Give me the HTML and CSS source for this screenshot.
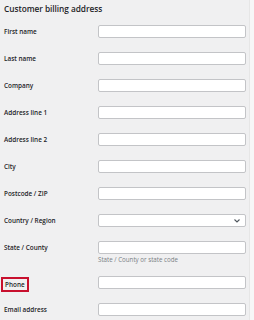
FILE: index.html
```html
<!DOCTYPE html>
<html lang="en">

<head>
    <meta charset="UTF-8">
    <meta name="viewport" content="width=device-width, initial-scale=1.0">
    <title>Customer billing address</title>
    <link rel="stylesheet" href="styles.css">
</head>

<body>

    <div class="panel">
        <h2 class="title">Customer billing address</h2>

        <div class="form">
            <div class="row">
                <label for="first_name">First name</label>
                <input type="text" id="first_name">
            </div>
            <div class="row">
                <label for="last_name">Last name</label>
                <input type="text" id="last_name">
            </div>
            <div class="row">
                <label for="company">Company</label>
                <input type="text" id="company">
            </div>
            <div class="row">
                <label for="address_1">Address line 1</label>
                <input type="text" id="address_1">
            </div>
            <div class="row">
                <label for="address_2">Address line 2</label>
                <input type="text" id="address_2">
            </div>
            <div class="row">
                <label for="city">City</label>
                <input type="text" id="city">
            </div>
            <div class="row">
                <label for="postcode">Postcode / ZIP</label>
                <input type="text" id="postcode">
            </div>
            <div class="row">
                <label for="country">Country / Region</label>
                <div class="select-wrap">
                    <select id="country">
                        <option value=""></option>
                    </select>
                    <svg class="chevron" width="6" height="4" viewBox="0 0 6 4">
                        <path d="M0.5 0.5 L3 3 L5.5 0.5" fill="none" stroke="#50575e" stroke-width="1.1"/>
                    </svg>
                </div>
            </div>
            <div class="row row-desc">
                <label for="state">State / County</label>
                <div class="field">
                    <input type="text" id="state">
                    <p class="description">State / County or state code</p>
                </div>
            </div>
            <div class="row">
                <label for="phone"><span class="highlight">Phone</span></label>
                <input type="text" id="phone">
            </div>
            <div class="row">
                <label for="email">Email address</label>
                <input type="text" id="email">
            </div>
        </div>
    </div>

</body>

</html>
```

FILE: styles.css
```css
body {
    margin: 0;
    padding: 0;
    background-color: #f7f7f7;
    font-family: "Open Sans", "Noto Sans", sans-serif;
    color: #1d2327;
}

.panel {
    width: 250px;
    height: 320px;
    box-sizing: border-box;
    background-color: #f0f0f1;
    border-right: 1px solid #e6e6e6;
    padding: 3px 0 0 4px;
    overflow: hidden;
}

.title {
    margin: 0 0 3px 0;
    font-size: 8.3px;
    font-weight: 600;
    line-height: 12px;
    letter-spacing: -0.05px;
}

.row {
    display: flex;
    align-items: flex-start;
    padding: 7px 0;
    height: 13px;
}

.row label {
    flex: none;
    width: 94px;
    font-size: 6.4px;
    font-weight: 600;
    line-height: 13px;
    color: #1d2327;
}

.row input,
.row select {
    width: 148px;
    height: 13px;
    box-sizing: border-box;
    margin: 0;
    padding: 0 3px;
    background-color: #ffffff;
    border: 1px solid #c3c4c7;
    border-radius: 2px;
    font-size: 6px;
}

.select-wrap {
    position: relative;
    width: 148px;
    height: 13px;
}

.select-wrap select {
    appearance: none;
    -webkit-appearance: none;
    display: block;
}

.chevron {
    position: absolute;
    right: 6px;
    top: 5px;
}

.row-desc {
    height: 22px;
    padding-bottom: 6px;
}

.field {
    width: 148px;
}

.field input {
    display: block;
}

.description {
    margin: 2px 0 0 0;
    font-size: 6.2px;
    line-height: 8px;
    color: #7a7f85;
}

.highlight {
    display: inline-block;
    margin: 1px 0 0 -3px;
    padding: 0 2px;
    height: 11px;
    line-height: 11px;
    border: 2px solid #c8102e;
    color: #1d2327;
}
```
